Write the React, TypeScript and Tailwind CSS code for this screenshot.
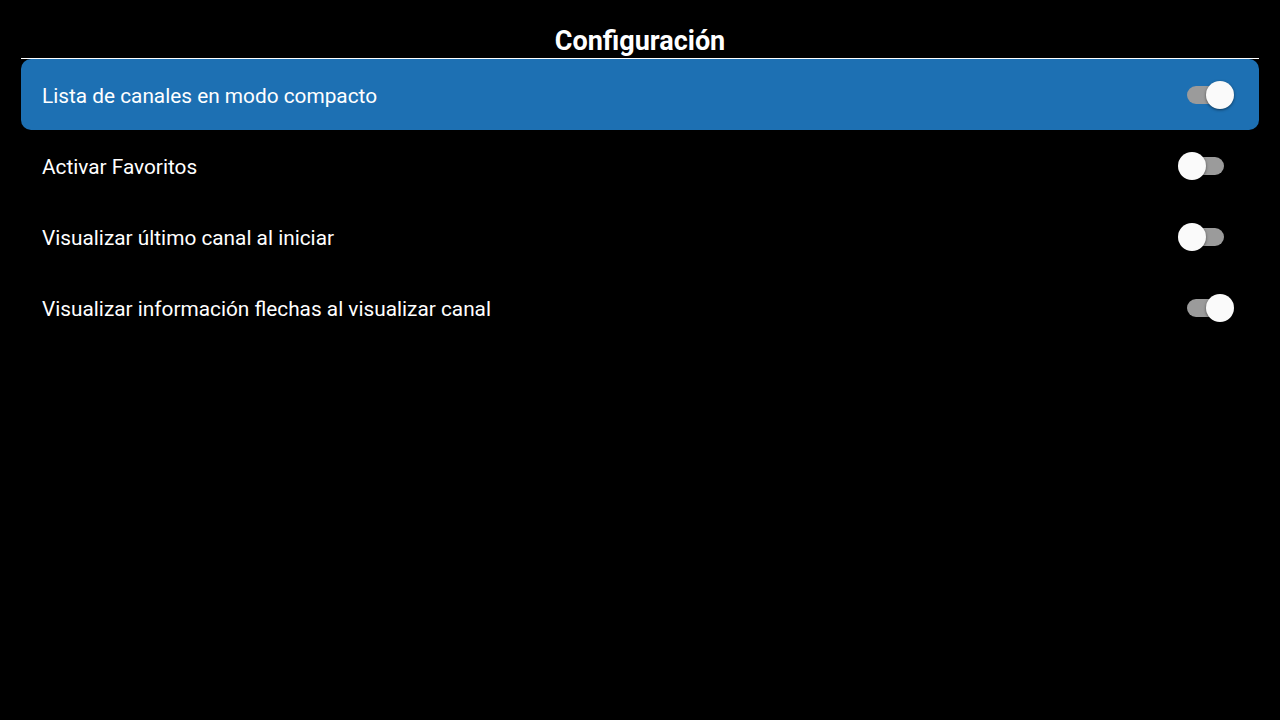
import { useState } from 'react';

type Setting = { id: string; label: string; on: boolean };

const initial: Setting[] = [
  { id: 'compact', label: 'Lista de canales en modo compacto', on: true },
  { id: 'favs', label: 'Activar Favoritos', on: false },
  { id: 'last', label: 'Visualizar último canal al iniciar', on: false },
  { id: 'arrows', label: 'Visualizar información flechas al visualizar canal', on: true },
];

function Toggle({ on }: { on: boolean }) {
  return (
    <div className="relative w-[56px] h-[28px] flex items-center">
      <div className="ml-[9px] w-[37px] h-[18px] rounded-full bg-[#9b9b9b]" />
      <div
        className={
          'absolute top-0 w-[28px] h-[28px] rounded-full bg-[#fafafa] shadow-[0_1px_3px_rgba(0,0,0,0.5)] ' +
          (on ? 'left-[28px]' : 'left-0')
        }
      />
    </div>
  );
}

export default function App() {
  const [settings, setSettings] = useState(initial);
  const [focused, setFocused] = useState('compact');

  const flip = (id: string) =>
    setSettings(s => s.map(x => (x.id === id ? { ...x, on: !x.on } : x)));

  return (
    <div className="w-[1280px] h-[720px] bg-black text-white px-[21px] font-['Roboto',sans-serif]">
      <div className="pt-[24px] border-b border-white">
        <h1 className="text-center text-[27px] leading-[34px] font-bold">Configuración</h1>
      </div>
      <ul>
        {settings.map(s => (
          <li
            key={s.id}
            onClick={() => { setFocused(s.id); flip(s.id); }}
            className={
              'h-[71px] flex items-center justify-between pl-[21px] pr-[25px] rounded-[10px] cursor-pointer ' +
              (focused === s.id ? 'bg-[#1d70b3]' : '')
            }
          >
            <span className="text-[20.8px] leading-none pt-[3px]">{s.label}</span>
            <Toggle on={s.on} />
          </li>
        ))}
      </ul>
    </div>
  );
}
